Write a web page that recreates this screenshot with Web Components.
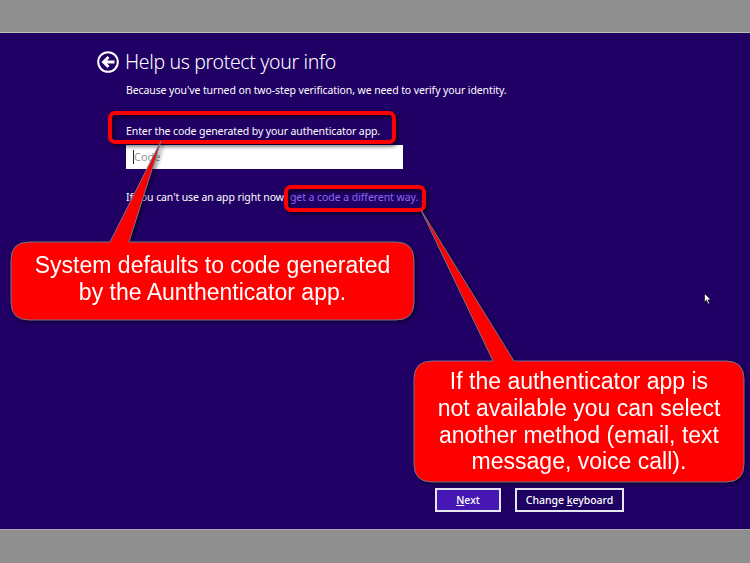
<!DOCTYPE html>
<html><head><meta charset="utf-8"><style>
html,body{margin:0;padding:0;width:750px;height:563px;overflow:hidden;background:#8f8f8f}
</style></head><body>
<x-screen>
  <x-heading slot="head">Help us protect your info</x-heading>
  <x-line style="margin-bottom:25px">Because you've turned on two-step verification, we need to verify your identity.</x-line>
  <x-line style="margin-bottom:6px">Enter the code generated by your authenticator app.</x-line>
  <x-code placeholder="Code"></x-code>
  <x-line style="margin-top:20px">If you can't use an app right now, <x-link>get a code a different way.</x-link></x-line>
  <x-btn slot="actions" primary accel="N" rest="ext"></x-btn>
  <x-btn slot="actions" before="Change " accel="k" rest="eyboard"></x-btn>
  <x-mark slot="over" style="left:108px;top:111px;width:288px;height:33px"></x-mark>
  <x-mark slot="over" style="left:284px;top:185px;width:142px;height:27px"></x-mark>
  <x-callout slot="over" style="left:11px;top:242px;width:403px;height:78px;padding-bottom:4px;box-sizing:border-box" tip="150,-101" base="99,118">System defaults to code generated<br>by the Aunthenticator app.</x-callout>
  <x-callout slot="over" style="left:414px;top:361px;width:330px;height:121px" tip="7,-151" base="79,100">If the authenticator app is<br>not available you can select<br>another method (email, text<br>message, voice call).</x-callout>
  <x-pointer slot="over" style="left:704px;top:293px"></x-pointer>
</x-screen>
<script>
const def=(n,css,html,extra)=>{customElements.define(n,class extends HTMLElement{constructor(){super();this.attachShadow({mode:'open'}).innerHTML='<style>'+css+'</style>'+html;}connectedCallback(){extra&&extra.call(this,this.shadowRoot)}})};
const UI='"Noto Sans","Open Sans",sans-serif';
def('x-screen',`:host{display:flex;flex-direction:column;position:relative;width:750px;height:563px;background:#8f8f8f;font-family:${UI};color:#fff}
.top,.bot{flex:none;background:#8f8f8f}
.top{height:32px}.bot{height:33px}
main{flex:1;background:#210066;border-top:1px solid #b9c4b0;border-bottom:1px solid #a8a8a8;display:flex;flex-direction:column;padding:17px 126px 17px 97px;min-height:0}
.body{padding-left:29px;flex:1}
.actions{display:flex;justify-content:flex-end;gap:14px}`,
`<div class="top"></div><main><slot name="head"></slot><div class="body"><slot></slot></div><div class="actions"><slot name="actions"></slot></div></main><div class="bot"></div><slot name="over"></slot>`);
def('x-heading',`:host{display:flex;align-items:center;gap:6px;height:24px;margin-bottom:8px;font-size:19.5px;line-height:24px;font-weight:300;letter-spacing:-.35px}svg{flex:none;width:22px;height:22px}`,
`<svg viewBox="0 0 22 22"><circle cx="11" cy="11" r="9.8" fill="none" stroke="#fff" stroke-width="2"/><path d="M17.5 11H7M11.5 6 6.5 11l5 5" fill="none" stroke="#fff" stroke-width="2.8"/></svg><span><slot></slot></span>`);
def('x-line',`:host{display:block;font-size:10.5px;line-height:16px;letter-spacing:-.1px;white-space:nowrap;color:#fff}`,`<slot></slot>`);
def('x-link',`:host{color:#8a6aec;letter-spacing:-.06px;margin-left:1px}`,`<slot></slot>`);
def('x-code',`:host{display:block;box-sizing:border-box;width:277px;height:24px;background:#fff;padding:4px 7px;color:#9a9a9a;font-size:11px;line-height:16px}
.c{display:inline-block;width:1px;height:14px;background:#222;vertical-align:-3px}`,`<span class="c"></span><span id="p"></span>`,function(s){s.getElementById('p').textContent=this.getAttribute('placeholder')});
def('x-btn',`:host{display:flex;box-sizing:border-box;height:24px;width:109px;align-items:center;justify-content:center;border:2px solid #e6e6f0;background:#1e0060;color:#fff;font-size:10.5px;font-weight:500;letter-spacing:-.05px;white-space:nowrap}
:host([primary]){background:#4617b4;width:66px}u{text-underline-offset:1px}`,`<span id="t"></span>`,function(s){const t=s.getElementById('t');t.append(this.getAttribute('before')||'');const u=document.createElement('u');u.textContent=this.getAttribute('accel');t.append(u,this.getAttribute('rest'))});
def('x-mark',`:host{position:absolute;box-sizing:border-box;border:4px solid #f00;border-radius:7px;filter:drop-shadow(2px 2px 2px rgba(0,0,0,.7))}`,``);
def('x-callout',`:host{position:absolute;display:flex;align-items:center;justify-content:center;text-align:center;color:#fff;font:23px/26.7px "Liberation Sans",Arial,sans-serif;filter:drop-shadow(2px 2px 2px rgba(0,0,0,.5))}
svg{position:absolute;left:0;top:0;width:100%;height:100%;overflow:visible}span{position:relative;white-space:nowrap}`,
`<svg><path id="p" fill="#f00" stroke="#77718f" stroke-width="1"/></svg><span><slot></slot></span>`,function(s){
 const w=parseFloat(this.style.width),h=parseFloat(this.style.height),r=18;
 const [tx,ty]=this.getAttribute('tip').split(',').map(Number),[a,b]=this.getAttribute('base').split(',').map(Number);
 s.getElementById('p').setAttribute('d',`M${r} 0H${a}L${tx} ${ty}L${b} 0H${w-r}Q${w} 0 ${w} ${r}V${h-r}Q${w} ${h} ${w-r} ${h}H${r}Q0 ${h} 0 ${h-r}V${r}Q0 0 ${r} 0Z`);
});
def('x-pointer',`:host{position:absolute;width:8px;height:12px}svg{display:block}`,`<svg width="8" height="12" viewBox="0 0 8 12"><path d="M.5.5V9l2-1.8L4 11l1.5-.6L4 6.8h3z" fill="#fff" stroke="#000" stroke-width=".6"/></svg>`);
</script>
</body></html>
